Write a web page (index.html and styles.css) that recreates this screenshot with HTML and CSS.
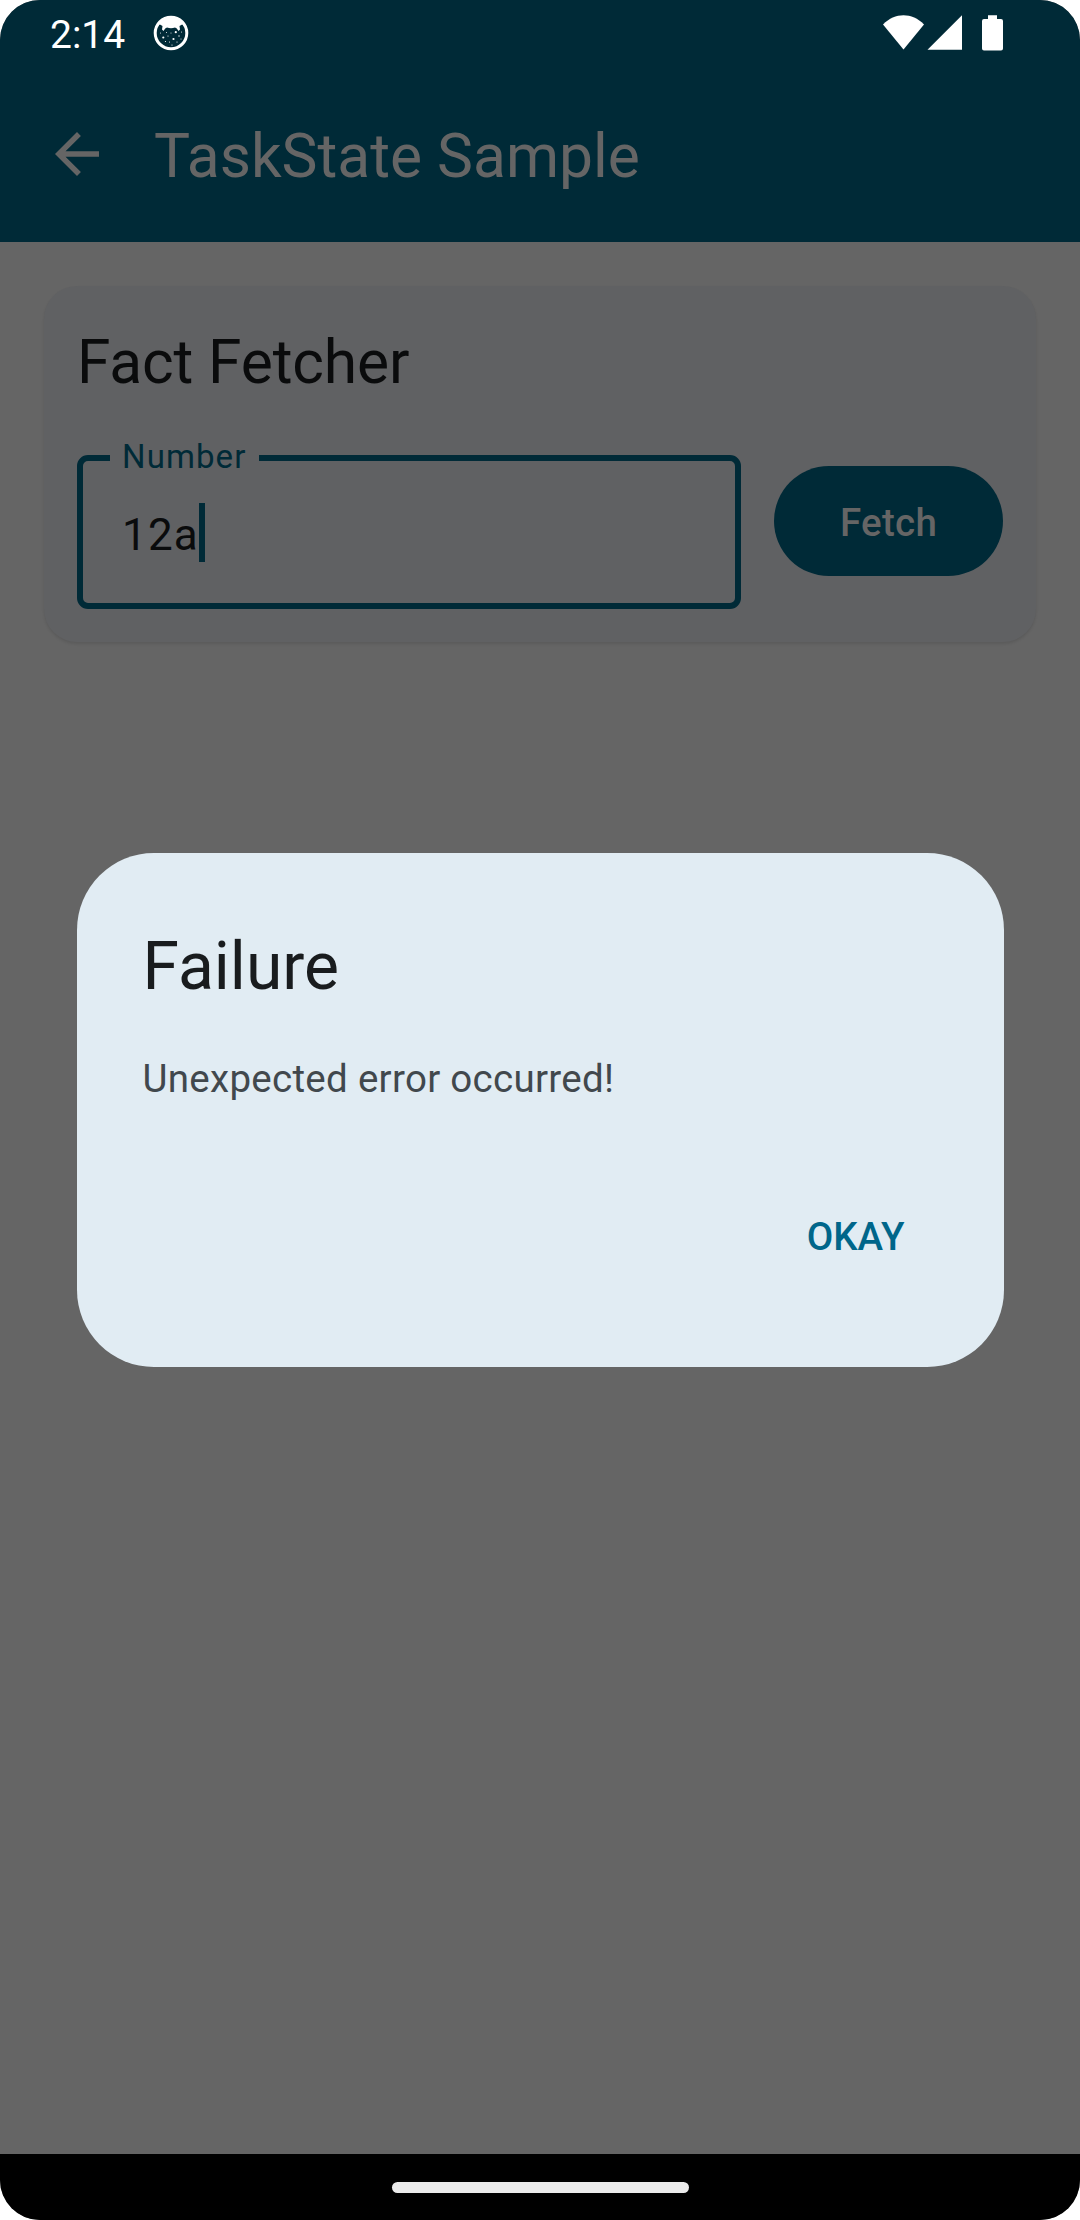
FILE: index.html
```html
<!DOCTYPE html>
<html lang="en">
<head>
<meta charset="utf-8">
<title>TaskState Sample</title>
<link rel="stylesheet" href="styles.css">
</head>
<body>
<div class="screen">
  <header class="header">
    <div class="status-bar">
      <div class="status-start">
        <span class="clock">2:14</span>
        <svg class="notification" viewBox="0 0 36 36" aria-hidden="true">
          <circle cx="18" cy="18" r="15.8" fill="none" stroke="#fff" stroke-width="3"/>
          <path fill="#fff" d="M3.500 13L6.500 8.500 12 3.500 18 2l6 1.500 5.500 5L32.500 13 29.500 9.300 26.500 11 27 14.500 25.500 16 23.800 13.500 22 12.500Q18 13.800 14 12.500L12.200 13.500 10.500 16 9 14.500 9.500 11 6.500 9.300z"/>
          <g fill="#fff">
            <circle cx="10.300" cy="22.500" r="1.100"/><circle cx="22.800" cy="17.200" r="1.100"/><circle cx="20.500" cy="24" r="1.100"/>
            <circle cx="15" cy="21" r=".6"/><circle cx="18" cy="18" r=".5"/><circle cx="13.500" cy="17.500" r=".5"/><circle cx="7.500" cy="18" r=".5"/>
            <circle cx="26" cy="21" r=".7"/><circle cx="28.500" cy="17" r=".5"/><circle cx="12.500" cy="26.500" r=".6"/><circle cx="16.500" cy="27" r=".6"/>
            <circle cx="24" cy="27" r=".6"/><circle cx="19" cy="30" r=".6"/><circle cx="28" cy="24" r=".5"/>
          </g>
        </svg>
      </div>
      <svg class="system-icons" viewBox="0 0 120 36" fill="#fff" aria-hidden="true">
        <path d="M0 9.500C12-2.700 29-2.700 41 9.500L20.500 34.500z"/>
        <path d="M79 .3V34.800H44.500z"/>
        <path d="M105 .3h9V4h4q2 0 2 2v27.500q0 2-2 2h-17q-2 0-2-2V6q0-2 2-2h4z"/>
      </svg>
    </div>
    <div class="app-bar">
      <svg class="back" viewBox="0 0 24 24" fill="#656565" aria-label="Back"><path d="M20 11H7.830l5.590-5.590L12 4l-8 8 8 8 1.410-1.410L7.830 13H20v-2z"/></svg>
      <h1 class="app-title">TaskState Sample</h1>
    </div>
  </header>

  <main class="content">
    <section class="card">
      <h2 class="card-title">Fact Fetcher</h2>
      <div class="form-row">
        <div class="field">
          <span class="field-label">Number</span>
          <span class="field-value">12a</span><span class="caret"></span>
        </div>
        <button class="fetch">Fetch</button>
      </div>
    </section>
  </main>

  <footer class="nav-bar"><span class="handle"></span></footer>

  <div class="overlay">
    <div class="dialog" role="dialog">
      <h2 class="dialog-title">Failure</h2>
      <p class="dialog-text">Unexpected error occurred!</p>
      <div class="dialog-actions"><button class="okay">OKAY</button></div>
    </div>
  </div>
</div>
</body>
</html>
```
FILE: styles.css
```css
* { box-sizing: border-box; }

body {
  margin: 0;
  background: #fff;
  font-family: Roboto, "Liberation Sans", sans-serif;
}

h1, h2, p { margin: 0; font-weight: 400; }

button {
  border: 0;
  background: none;
  font-family: inherit;
  font-size: 38.5px;
  font-weight: 500;
  letter-spacing: 0.275px;
  line-height: 55px;
}

.screen {
  position: relative;
  display: flex;
  flex-direction: column;
  width: 1080px;
  height: 2220px;
  overflow: hidden;
  border-radius: 40px;
  background: #656565;
}

.header { height: 242px; background: #002a37; }

.status-bar {
  display: flex;
  justify-content: space-between;
  align-items: flex-start;
  height: 66px;
  padding: 15px 77px 0 50px;
}

.status-start { display: flex; align-items: flex-start; gap: 28px; }

.clock { padding-top: 1px; color: #fff; font-size: 39px; line-height: 38px; }

.notification { width: 36px; height: 36px; }

.system-icons { width: 120px; height: 36px; }

.app-bar {
  display: flex;
  align-items: center;
  gap: 44px;
  height: 176px;
  padding: 0 44px;
}

.back { width: 66px; height: 66px; }

.app-title {
  padding-top: 4px;
  color: #656565;
  font-size: 60.5px;
  line-height: 77px;
}

.content { flex: 1; padding: 44px; }

.card {
  width: 992px;
  height: 356px;
  padding: 38px 33px 33px;
  border-radius: 33px;
  background: #606163;
  box-shadow: 0 2px 3px rgba(0, 0, 0, 0.1);
}

.card-title {
  color: #0a0b0c;
  font-size: 60.5px;
  letter-spacing: -0.15px;
  line-height: 77px;
}

.form-row {
  display: flex;
  align-items: flex-start;
  gap: 33px;
  margin-top: 54px;
}

.field {
  position: relative;
  display: flex;
  align-items: center;
  width: 664px;
  height: 154px;
  padding-left: 39px;
  border: 6px solid #002a37;
  border-radius: 11px;
}

.field-label {
  position: absolute;
  top: -26px;
  left: 27px;
  width: 149px;
  padding-left: 12px;
  background: #606163;
  color: #002a37;
  font-size: 33px;
  letter-spacing: 1.1px;
  line-height: 44px;
}

.field-value {
  padding-top: 5px;
  color: #0a0b0c;
  font-size: 44px;
  letter-spacing: 1.2px;
  line-height: 66px;
}

.caret { width: 6px; height: 59px; background: #002a37; }

.fetch {
  width: 229px;
  height: 110px;
  margin-top: 11px;
  padding: 2px 0 0;
  border-radius: 55px;
  background: #002a37;
  color: #656565;
}

.nav-bar {
  display: flex;
  align-items: center;
  justify-content: center;
  height: 66px;
  background: #000;
}

.handle { width: 297px; height: 11px; border-radius: 6px; background: #ebebeb; }

.overlay {
  position: absolute;
  inset: 0;
  display: flex;
  align-items: center;
  justify-content: center;
}

.dialog {
  width: 927px;
  height: 514px;
  padding: 70px 66px 66px;
  border-radius: 77px;
  background: #e1ecf3;
}

.dialog-title { color: #191c1e; font-size: 66px; line-height: 88px; }

.dialog-text {
  margin-top: 40px;
  color: #41484d;
  font-size: 38.5px;
  letter-spacing: 0.29px;
  line-height: 55px;
}

.dialog-actions { display: flex; justify-content: flex-end; margin-top: 75px; }

.okay {
  height: 110px;
  padding: 0 33px;
  color: #00668a;
  letter-spacing: 0;
}
```
